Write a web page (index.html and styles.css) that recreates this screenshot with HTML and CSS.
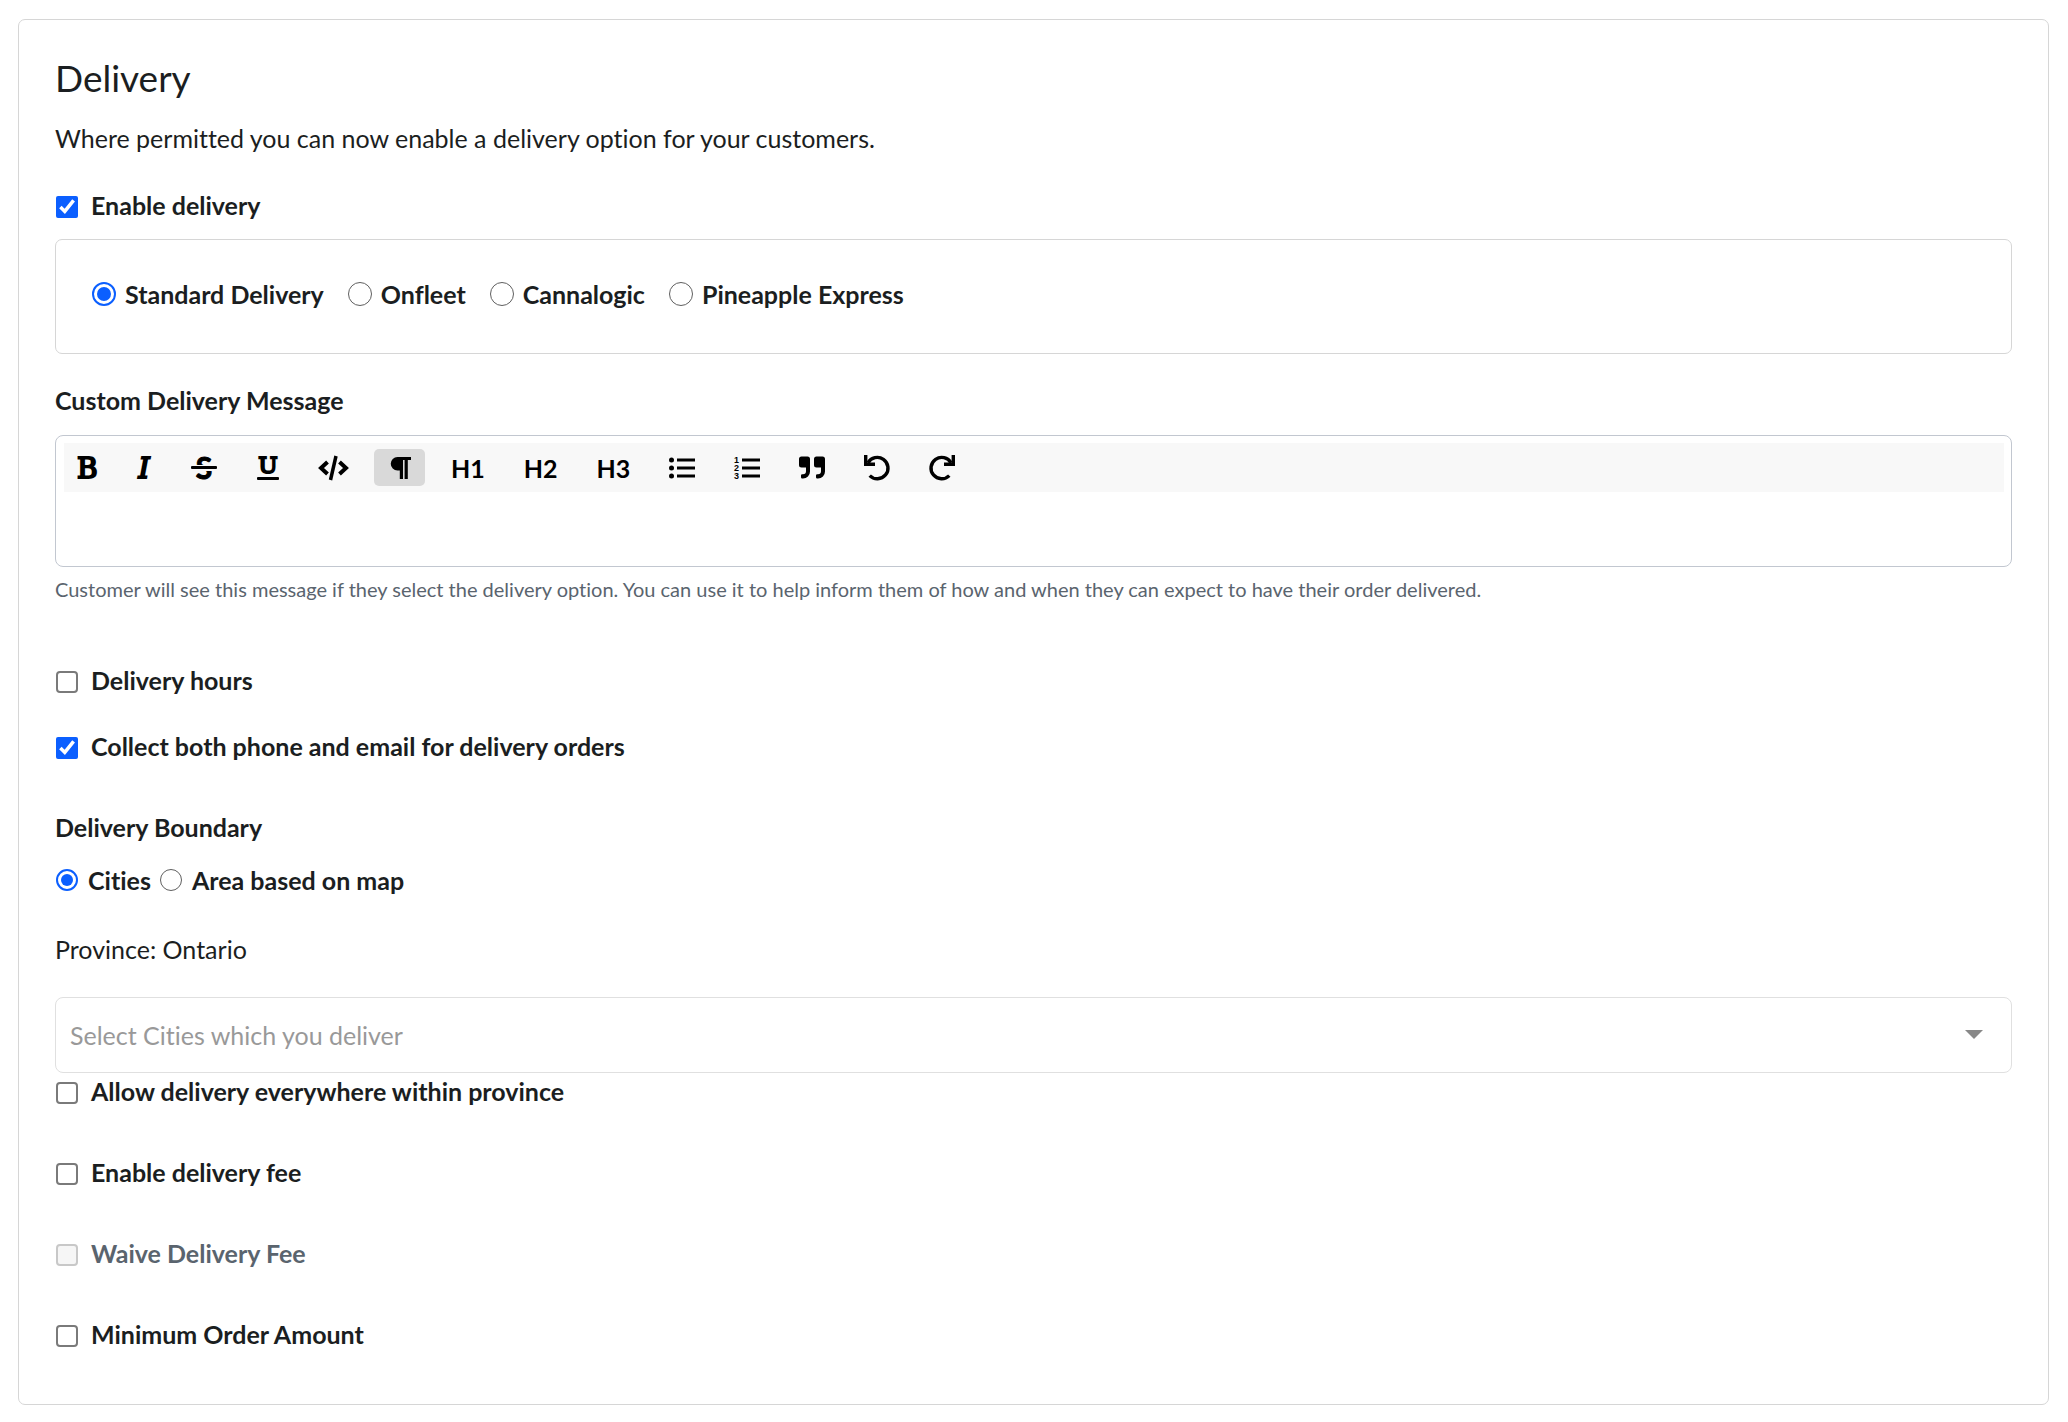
FILE: index.html
```
<!DOCTYPE html>
<html lang="en">
<head>
    <meta charset="UTF-8">
    <meta name="viewport" content="width=device-width, initial-scale=1.0">
    <title>Delivery</title>
    <link rel="stylesheet" href="styles.css">
</head>
<body>
    <form class="card">
        <h1>Delivery</h1>
        <p class="intro">Where permitted you can now enable a delivery option for your customers.</p>

        <div class="check enable">
            <input type="checkbox" id="enable-delivery" checked>
            <label for="enable-delivery">Enable delivery</label>
        </div>

        <div class="providers">
            <div class="radio">
                <input type="radio" name="provider" id="provider-standard" checked>
                <label for="provider-standard">Standard Delivery</label>
            </div>
            <div class="radio">
                <input type="radio" name="provider" id="provider-onfleet">
                <label for="provider-onfleet">Onfleet</label>
            </div>
            <div class="radio">
                <input type="radio" name="provider" id="provider-cannalogic">
                <label for="provider-cannalogic">Cannalogic</label>
            </div>
            <div class="radio">
                <input type="radio" name="provider" id="provider-pineapple">
                <label for="provider-pineapple">Pineapple Express</label>
            </div>
        </div>

        <label class="field-label" for="message">Custom Delivery Message</label>
        <div class="editor">
            <div class="toolbar">
                <button type="button" aria-label="Bold">
                    <svg width="20" height="26"><text class="slab" x="0" y="23">B</text></svg>
                </button>
                <button type="button" aria-label="Italic">
                    <svg width="16" height="26"><text class="slab italic" x="8" y="23" text-anchor="middle">I</text></svg>
                </button>
                <button type="button" aria-label="Strikethrough">
                    <svg width="26" height="26">
                        <text class="strike-letter" x="13" y="24" text-anchor="middle">S</text>
                        <rect class="gap" x="0" y="10" width="26" height="6"/>
                        <rect x="0" y="11" width="26" height="3" rx="1"/>
                    </svg>
                </button>
                <button type="button" aria-label="Underline">
                    <svg width="23" height="26">
                        <text class="slab under" x="12" y="18" text-anchor="middle">U</text>
                        <rect x="1" y="22" width="22" height="3" rx="1"/>
                    </svg>
                </button>
                <button type="button" aria-label="Code">
                    <svg width="30" height="26" class="line">
                        <path d="M9.500 7L3 13l6.500 6M21.500 7l6.500 6-6.500 6" stroke-width="4"/>
                        <path d="M18 1L12.500 25" stroke-width="3.500"/>
                    </svg>
                </button>
                <button type="button" class="active" aria-label="Paragraph">
                    <svg width="25" height="26">
                        <path d="M10.500 2H24V5H20.800V24H17.600V5H16V24H12.800V15.500H10.500A6.750 6.750 0 0 1 10.500 2Z"/>
                    </svg>
                </button>
                <button type="button">H1</button>
                <button type="button">H2</button>
                <button type="button">H3</button>
                <button type="button" aria-label="Bullet list">
                    <svg width="26" height="26">
                        <circle cx="2.500" cy="5" r="2.500"/>
                        <circle cx="2.500" cy="13" r="2.500"/>
                        <circle cx="2.500" cy="21" r="2.500"/>
                        <path d="M8 3.500H26V6.500H8ZM8 11.500H26V14.500H8ZM8 19.500H26V22.500H8Z"/>
                    </svg>
                </button>
                <button type="button" aria-label="Ordered list">
                    <svg width="26" height="26">
                        <text class="num" x="0" y="8">1</text>
                        <text class="num" x="0" y="16">2</text>
                        <text class="num" x="0" y="24">3</text>
                        <path d="M8 3.500H26V6.500H8ZM8 11.500H26V14.500H8ZM8 19.500H26V22.500H8Z"/>
                    </svg>
                </button>
                <button type="button" aria-label="Blockquote">
                    <svg width="26" height="26">
                        <path d="M2.500 1.500H8.500A2.500 2.500 0 0 1 11 4V16.500A7 7 0 0 1 4 23.500H3.200A1.200 1.200 0 0 1 2 22.300V20.500A1.200 1.200 0 0 1 3.200 19.300H4A3 3 0 0 0 7 16.300V12.500H2.500A2.500 2.500 0 0 1 0 10V4A2.500 2.500 0 0 1 2.500 1.500Z"/>
                        <path d="M17.500 1.500H23.500A2.500 2.500 0 0 1 26 4V16.500A7 7 0 0 1 19 23.500H18.200A1.200 1.200 0 0 1 17 22.300V20.500A1.200 1.200 0 0 1 18.200 19.300H19A3 3 0 0 0 22 16.300V12.500H17.500A2.500 2.500 0 0 1 15 10V4A2.500 2.500 0 0 1 17.500 1.500Z"/>
                    </svg>
                </button>
                <button type="button" aria-label="Undo">
                    <svg width="26" height="26" class="line">
                        <path d="M4 7.800A10.700 10.700 0 1 1 5.700 20.600" stroke-width="3.400"/>
                        <path d="M1.700 0V9.300H11" stroke-width="3.400"/>
                    </svg>
                </button>
                <button type="button" aria-label="Redo">
                    <svg width="26" height="26" class="line">
                        <path d="M22 7.800A10.700 10.700 0 1 0 20.300 20.600" stroke-width="3.400"/>
                        <path d="M24.300 0V9.300H15" stroke-width="3.400"/>
                    </svg>
                </button>
            </div>
            <textarea id="message" aria-describedby="message-help"></textarea>
        </div>
        <p class="help" id="message-help">Customer will see this message if they select the delivery option. You can use it to help inform them of how and when they can expect to have their order delivered.</p>

        <div class="check hours">
            <input type="checkbox" id="delivery-hours">
            <label for="delivery-hours">Delivery hours</label>
        </div>
        <div class="check collect">
            <input type="checkbox" id="collect-contact" checked>
            <label for="collect-contact">Collect both phone and email for delivery orders</label>
        </div>

        <fieldset>
            <legend>Delivery Boundary</legend>
            <div class="boundary">
                <div class="radio">
                    <input type="radio" name="boundary" id="boundary-cities" checked>
                    <label for="boundary-cities">Cities</label>
                </div>
                <div class="radio">
                    <input type="radio" name="boundary" id="boundary-map">
                    <label for="boundary-map">Area based on map</label>
                </div>
            </div>
        </fieldset>

        <p class="province">Province: Ontario</p>
        <div class="select">
            <select aria-label="Cities">
                <option>Select Cities which you deliver</option>
            </select>
        </div>

        <div class="options">
            <div class="check">
                <input type="checkbox" id="allow-everywhere">
                <label for="allow-everywhere">Allow delivery everywhere within province</label>
            </div>
            <div class="check">
                <input type="checkbox" id="delivery-fee">
                <label for="delivery-fee">Enable delivery fee</label>
            </div>
            <div class="check">
                <input type="checkbox" id="waive-fee" disabled>
                <label for="waive-fee">Waive Delivery Fee</label>
            </div>
            <div class="check">
                <input type="checkbox" id="minimum-order">
                <label for="minimum-order">Minimum Order Amount</label>
            </div>
        </div>
    </form>
</body>
</html>
```
FILE: styles.css
```
:root {
    --text: #1b1e21;
    --muted: #5a646e;
    --border: #d6d6d6;
    --blue: #0b5fff;
}

* {
    box-sizing: border-box;
}

body {
    margin: 0;
    padding: 19px 19px 17px 18px;
    background-color: #fff;
    color: var(--text);
    font-family: Lato, sans-serif;
    font-size: 25px;
    font-variant-ligatures: no-common-ligatures;
    line-height: 36px;
}

.card {
    padding: 36px 36px 52px;
    border: 1px solid var(--border);
    border-radius: 7px;
}

h1,
p {
    margin: 0;
}

h1 {
    font-size: 37px;
    font-weight: 400;
    line-height: 43px;
}

.intro {
    margin-top: 21px;
}

label,
legend {
    font-weight: 700;
}

.check,
.radio {
    display: flex;
    align-items: center;
}

input {
    flex: none;
    accent-color: var(--blue);
}

.check input {
    width: 22px;
    height: 22px;
    margin: 4px 13px 0 1px;
}

.check input:not(:checked) {
    appearance: none;
    border: 2px solid #7a7a7a;
    border-radius: 4px;
    background-color: #fff;
}

.check input:disabled {
    border-color: #c8c8c8;
    background-color: #f6f6f6;
}

.check input:disabled + label {
    color: var(--muted);
}

.enable {
    margin-top: 31px;
}

.providers {
    display: flex;
    gap: 24px;
    margin-top: 16px;
    padding: 36px 36px 41px;
    border: 1px solid var(--border);
    border-radius: 7px;
}

.radio input {
    appearance: none;
    width: 24px;
    height: 24px;
    margin: 0 9px 0 0;
    border: 1px solid #5f5f5f;
    border-radius: 50%;
}

.radio input:checked {
    padding: 3px;
    border: 2px solid var(--blue);
    background-color: var(--blue);
    background-clip: content-box;
}

.field-label {
    display: block;
    margin-top: 28px;
}

.editor {
    margin-top: 17px;
    padding: 7px 7px 0 8px;
    border: 1px solid #c2c7d0;
    border-radius: 8px;
}

.toolbar {
    display: flex;
    gap: 13px;
    padding: 6px 0;
    background-color: #f8f8f8;
}

.toolbar button {
    display: flex;
    align-items: center;
    height: 37px;
    padding: 0 13px;
    border: 0;
    border-radius: 5px;
    background-color: transparent;
    color: #000;
    font-family: inherit;
    font-size: 25px;
    font-weight: 700;
}

.toolbar .active {
    background-color: #d9d9d9;
}

.toolbar svg {
    overflow: visible;
}

.line {
    fill: none;
    stroke: #000;
}

.slab {
    font: 400 28px "DejaVu Serif", serif;
    stroke: #000;
    stroke-width: 2px;
}

.slab.italic {
    font-style: italic;
}

.slab.under {
    font-size: 23px;
}

.strike-letter {
    font: 700 30px Lato, sans-serif;
    stroke: #000;
    stroke-width: 1px;
}

.gap {
    fill: #f8f8f8;
}

.num {
    font: 700 9px "Liberation Sans", sans-serif;
}

textarea {
    display: block;
    width: 100%;
    height: 74px;
    padding: 12px;
    border: 0;
    outline: 0;
    background-color: transparent;
    font: inherit;
    resize: none;
}

.help {
    margin-top: 7px;
    color: var(--muted);
    font-size: 20px;
    line-height: 30px;
}

.hours {
    margin-top: 58px;
}

.collect {
    margin-top: 30px;
}

fieldset {
    margin: 45px 0 0;
    padding: 0;
    border: 0;
}

legend {
    padding: 0;
}

.boundary {
    display: flex;
    gap: 8px;
    margin-top: 17px;
}

.boundary input {
    width: 22px;
    height: 22px;
    margin: 0 10px 0 1px;
}

.province {
    margin-top: 33px;
}

.select {
    position: relative;
    margin-top: 30px;
}

.select::after {
    content: "";
    position: absolute;
    top: 33px;
    right: 29px;
    border: 9px solid transparent;
    border-top-color: #888;
    border-bottom: 0;
    pointer-events: none;
}

select {
    display: block;
    width: 100%;
    height: 76px;
    padding: 0 14px;
    border: 1px solid #e0e0e0;
    border-radius: 8px;
    background-color: #fff;
    color: #999;
    font: inherit;
    appearance: none;
}

.options {
    display: flex;
    flex-direction: column;
    gap: 45px;
}
```
